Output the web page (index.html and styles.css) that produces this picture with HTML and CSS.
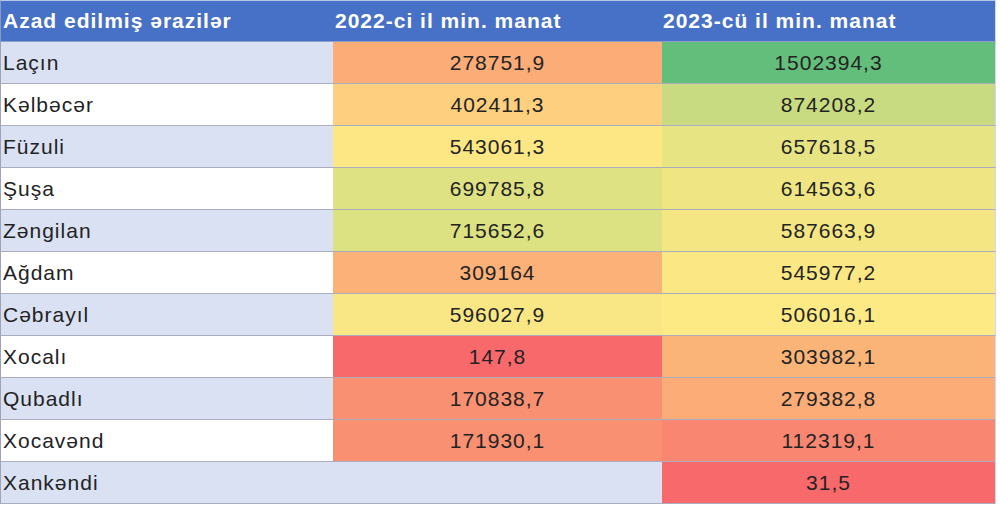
FILE: index.html
```html
<!DOCTYPE html>
<html lang="az">
<head>
<meta charset="utf-8">
<title>Azad edilmiş ərazilər</title>
<link rel="stylesheet" href="styles.css">
</head>
<body>
<div class="tbl">
  <div class="cell head">Azad edilmiş ərazilər</div>
  <div class="cell head">2022-ci il min. manat</div>
  <div class="cell head">2023-cü il min. manat</div>

  <div class="cell name odd">Laçın</div>
  <div class="cell num" style="background:#FBAC77">278751,9</div>
  <div class="cell num last" style="background:#63BE7B">1502394,3</div>

  <div class="cell name even">Kəlbəcər</div>
  <div class="cell num" style="background:#FDCF7F">402411,3</div>
  <div class="cell num last" style="background:#C8DB81">874208,2</div>

  <div class="cell name odd">Füzuli</div>
  <div class="cell num" style="background:#FCE784">543061,3</div>
  <div class="cell num last" style="background:#E7E483">657618,5</div>

  <div class="cell name even">Şuşa</div>
  <div class="cell num" style="background:#DFE283">699785,8</div>
  <div class="cell num last" style="background:#EFE683">614563,6</div>

  <div class="cell name odd">Zəngilan</div>
  <div class="cell num" style="background:#DCE182">715652,6</div>
  <div class="cell num last" style="background:#F4E783">587663,9</div>

  <div class="cell name even">Ağdam</div>
  <div class="cell num" style="background:#FBB178">309164</div>
  <div class="cell num last" style="background:#FBE884">545977,2</div>

  <div class="cell name odd">Cəbrayıl</div>
  <div class="cell num" style="background:#F8E784">596027,9</div>
  <div class="cell num last" style="background:#FEEA84">506016,1</div>

  <div class="cell name even">Xocalı</div>
  <div class="cell num" style="background:#F8696B">147,8</div>
  <div class="cell num last" style="background:#FBB478">303982,1</div>

  <div class="cell name odd">Qubadlı</div>
  <div class="cell num" style="background:#FA9072">170838,7</div>
  <div class="cell num last" style="background:#FBAC77">279382,8</div>

  <div class="cell name even">Xocavənd</div>
  <div class="cell num" style="background:#FA9072">171930,1</div>
  <div class="cell num last" style="background:#F98670">112319,1</div>

  <div class="cell name odd">Xankəndi</div>
  <div class="cell num odd"></div>
  <div class="cell num last" style="background:#F8696B">31,5</div>
</div>
</body>
</html>
```

FILE: styles.css
```css
html, body {
  margin: 0;
  padding: 0;
  background: #ffffff;
}

.tbl {
  display: grid;
  grid-template-columns: 333px 329px 334px;
  grid-auto-rows: 42px;
  width: 996px;
  font-family: "Liberation Sans", Arial, sans-serif;
  font-size: 21px;
  letter-spacing: 1px;
  color: #232323;
}

.cell {
  box-sizing: border-box;
  display: flex;
  align-items: center;
  white-space: nowrap;
  border-bottom: 1px solid #a9adbd;
}

.head {
  background: #4771C6;
  color: #ffffff;
  font-weight: bold;
  border-top: 1px solid #b9c8e8;
  border-bottom: 1px solid #8f9fc9;
  padding-left: 2px;
}

.head:first-child {
  border-left: 1px solid #8a9ac4;
}

.head:nth-child(3) {
  padding-left: 1px;
  border-right: 1px solid #cfdaf0;
}

.name {
  padding-left: 2px;
  border-left: 1px solid #9ea3b5;
}

.odd {
  background: #D9E1F2;
}

.even {
  background: #ffffff;
}

.num {
  justify-content: center;
}

.last {
  border-right: 1px solid #cfdaf0;
}
```
